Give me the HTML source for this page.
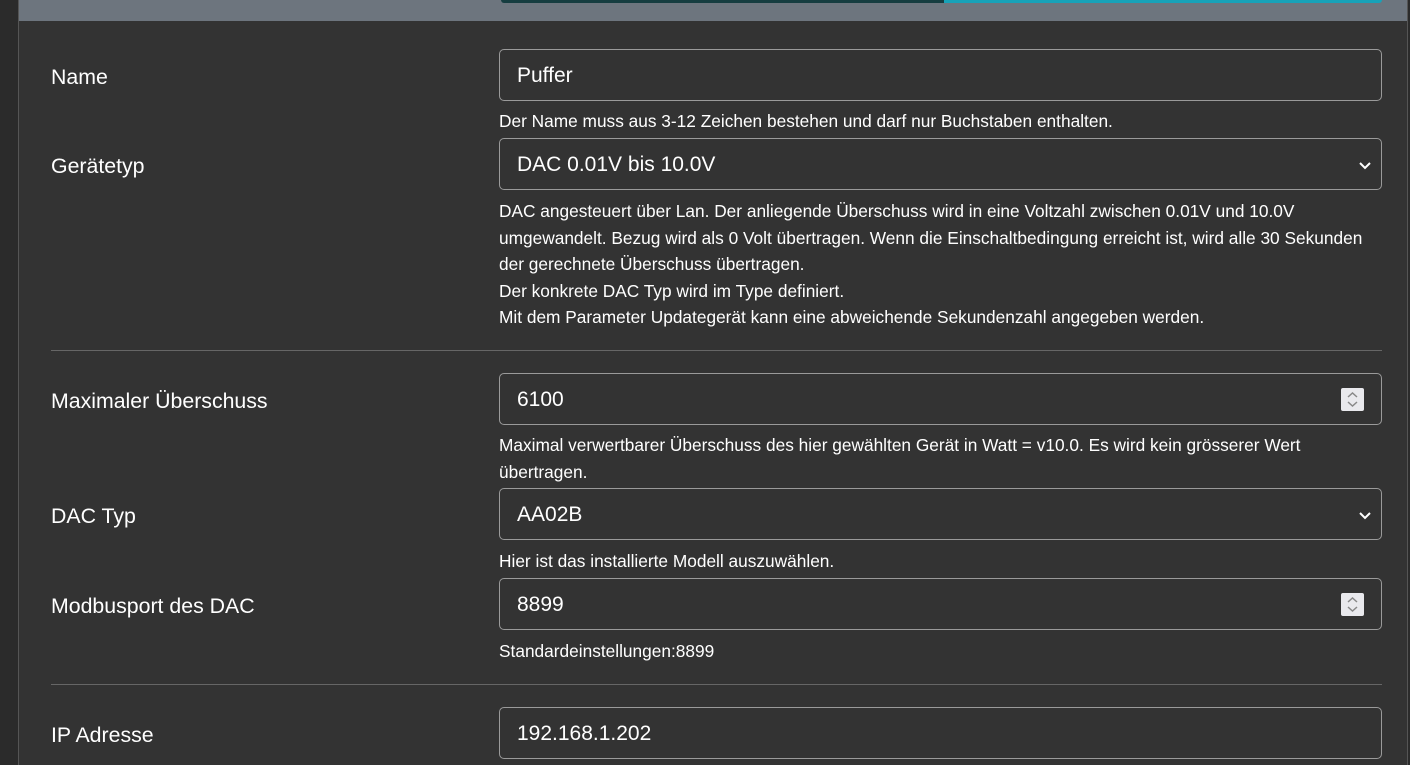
<!DOCTYPE html>
<html><head><style>
*{box-sizing:border-box;margin:0;padding:0}
html,body{width:1410px;height:765px;overflow:hidden}
body{background:#2b2b2b;font-family:"Liberation Sans",sans-serif;color:#fff;position:relative}
.card{position:absolute;left:18px;top:0;width:1390px;height:765px;background:#333;border-left:1px solid #555;border-right:1px solid #555}
.hdr{position:absolute;left:0;top:0;width:100%;height:21px;background:#6d757e}
.bar1{position:absolute;left:482px;top:0;width:444px;height:3px;background:#163d40;border-radius:0 0 0 3px}
.bar2{position:absolute;left:925px;top:0;width:438px;height:3px;background:#17a2b8;border-radius:0 0 3px 0}
.lbl{position:absolute;left:51px;font-size:21.3px;color:#fff}
.in{position:absolute;left:499px;width:883px;height:52px;border:1px solid #9a9a9a;border-radius:5px;font-size:21px;padding:14px 17px;color:#fff}
.help{position:absolute;left:499px;font-size:17.3px;line-height:26.5px;color:#fff}
.hr{position:absolute;left:51px;width:1331px;height:1px;background:#666}
.chev{position:absolute;right:8px;top:18px;width:16px;height:16px}
.spin{position:absolute;right:17px;top:14px;width:23px;height:23px;background:#e9e9ed;border-radius:2px}
</style></head><body>
<div class="card"><div class="hdr"></div><div class="bar1"></div><div class="bar2"></div></div>

<div class="lbl" style="top:65px">Name</div>
<div class="in" style="top:49px">Puffer</div>
<div class="help" style="top:108px">Der Name muss aus 3-12 Zeichen bestehen und darf nur Buchstaben enthalten.</div>

<div class="lbl" style="top:154px">Gerätetyp</div>
<div class="in" style="top:138px">DAC 0.01V bis 10.0V<svg class="chev" viewBox="0 0 16 16"><path d="M3 6l5 5 5-5" stroke="#fff" stroke-width="2" fill="none"/></svg></div>
<div class="help" style="top:198px">DAC angesteuert über Lan. Der anliegende Überschuss wird in eine Voltzahl zwischen 0.01V und 10.0V<br>umgewandelt. Bezug wird als 0 Volt übertragen. Wenn die Einschaltbedingung erreicht ist, wird alle 30 Sekunden<br>der gerechnete Überschuss übertragen.<br>Der konkrete DAC Typ wird im Type definiert.<br>Mit dem Parameter Updategerät kann eine abweichende Sekundenzahl angegeben werden.</div>

<div class="hr" style="top:350px"></div>

<div class="lbl" style="top:389px">Maximaler Überschuss</div>
<div class="in" style="top:373px">6100<div class="spin"><svg viewBox="0 0 23 23" width="23" height="23"><path d="M7 9l4.5-4 4.5 4M7 14l4.5 4 4.5-4" stroke="#888" stroke-width="1.5" fill="none"/></svg></div></div>
<div class="help" style="top:432px">Maximal verwertbarer Überschuss des hier gewählten Gerät in Watt = v10.0. Es wird kein grösserer Wert<br>übertragen.</div>

<div class="lbl" style="top:504px">DAC Typ</div>
<div class="in" style="top:488px">AA02B<svg class="chev" viewBox="0 0 16 16"><path d="M3 6l5 5 5-5" stroke="#fff" stroke-width="2" fill="none"/></svg></div>
<div class="help" style="top:548px">Hier ist das installierte Modell auszuwählen.</div>

<div class="lbl" style="top:594px">Modbusport des DAC</div>
<div class="in" style="top:578px">8899<div class="spin"><svg viewBox="0 0 23 23" width="23" height="23"><path d="M7 9l4.5-4 4.5 4M7 14l4.5 4 4.5-4" stroke="#888" stroke-width="1.5" fill="none"/></svg></div></div>
<div class="help" style="top:638px">Standardeinstellungen:8899</div>

<div class="hr" style="top:684px"></div>

<div class="lbl" style="top:723px">IP Adresse</div>
<div class="in" style="top:707px">192.168.1.202</div>
</body></html>
